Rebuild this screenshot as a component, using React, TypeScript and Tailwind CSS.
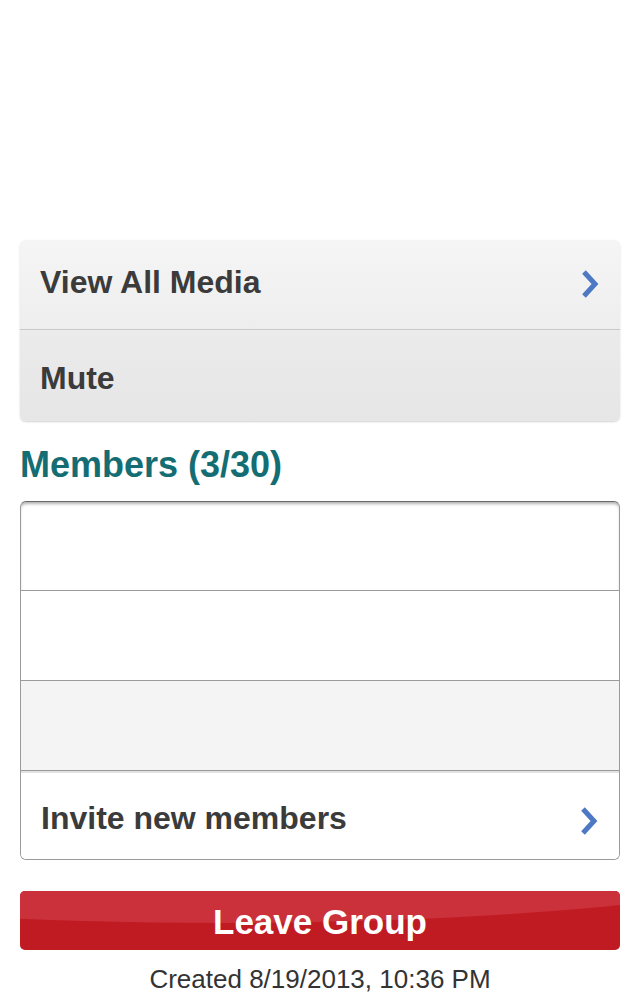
import React from 'react';

const Chevron = () => (
    <svg width="20" height="28" viewBox="0 0 20 28" className="shrink-0 mt-[5px]">
        <polyline
            points="4,2 15,14 4,26"
            fill="none"
            stroke="#4c78c4"
            strokeWidth="5"
            strokeLinecap="butt"
            strokeLinejoin="miter"
        />
    </svg>
);

const App = () => {
    const font = { fontFamily: '"Liberation Sans", Arial, sans-serif' };

    return (
        <div className="min-h-[995px] bg-white pl-[20px] pt-[240px]" style={font}>
            <div className="w-[600px]">
                {/* Actions card */}
                <div className="rounded-[6px] overflow-hidden shadow-[0_1px_2px_rgba(0,0,0,0.18)]">
                    <div className="h-[89px] flex items-center justify-between pl-[20px] pr-[20px] pb-[6px] bg-gradient-to-b from-[#f5f5f5] to-[#eeeeee]">
                        <span className="text-[32px] font-bold text-[#3b3b3b] leading-none">View All Media</span>
                        <Chevron />
                    </div>
                    <div className="h-[92px] flex items-center pl-[20px] pt-[4px] border-t border-[#c9c9c9] bg-gradient-to-b from-[#ebebeb] to-[#e6e6e6]">
                        <span className="text-[32px] font-bold text-[#3b3b3b] leading-none">Mute</span>
                    </div>
                </div>

                {/* Members */}
                <h2 className="mt-[26px] mb-[18px] h-[36px] text-[36px] leading-[36px] font-bold text-[#146d72]">
                    Members (3/30)
                </h2>

                <div className="rounded-[6px] border border-[#9a9a9a] border-t-[#6a6a6a] overflow-hidden shadow-[inset_0_3px_3px_-1px_rgba(0,0,0,0.3)]">
                    <div className="h-[88px] bg-transparent" />
                    <div className="h-[90px] border-t border-[#9a9a9a] bg-white" />
                    <div className="h-[90px] border-t border-[#9a9a9a] bg-[#f4f4f4]" />
                    <div className="h-[89px] border-t border-[#9a9a9a] bg-white flex items-center justify-between pl-[20px] pr-[20px] pt-[6px] shadow-[inset_0_2px_0_#e2e2e2]">
                        <span className="text-[32px] font-bold text-[#3b3b3b] leading-none">Invite new members</span>
                        <Chevron />
                    </div>
                </div>

                {/* Leave button */}
                <button className="relative mt-[31px] w-full h-[59px] rounded-[5px] overflow-hidden bg-[#c01b23] flex items-center justify-center pt-[2px]">
                    <div className="absolute left-[-500px] top-[-168px] w-[1400px] h-[200px] rounded-[50%] bg-[#cb313b]" />
                    <span className="relative text-[35px] font-bold text-white leading-none" style={font}>
                        Leave Group
                    </span>
                </button>

                <p className="mt-[16px] text-center text-[26px] leading-[26px] text-[#333333]">
                    Created 8/19/2013, 10:36 PM
                </p>
            </div>
        </div>
    );
};

export default App;
